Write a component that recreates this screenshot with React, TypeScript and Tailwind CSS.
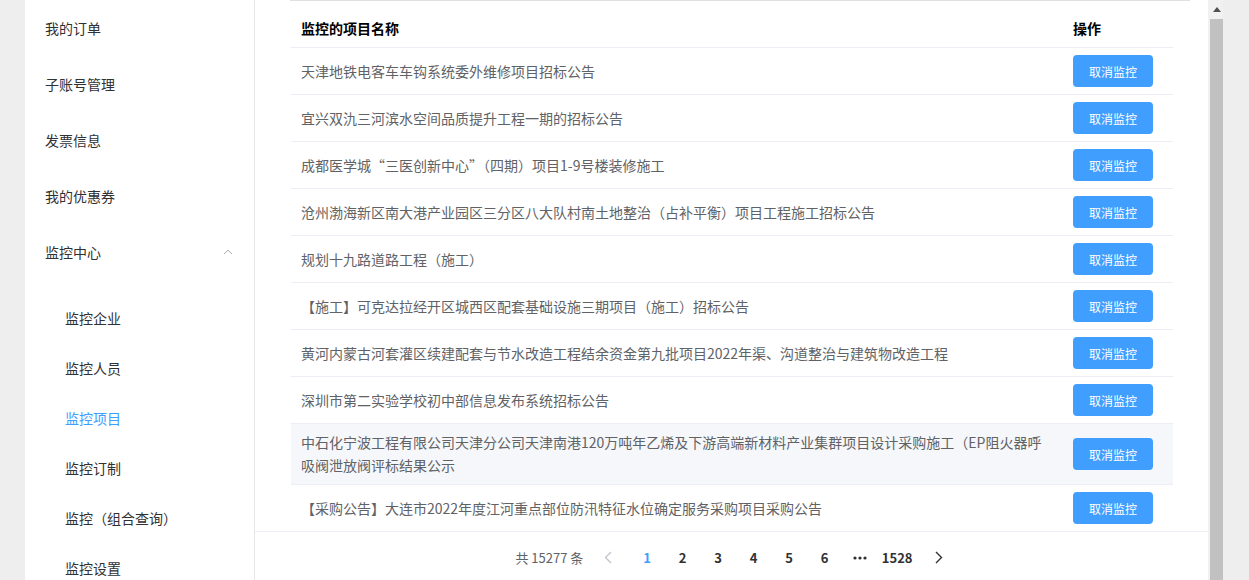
import React from 'react';

const menu = ['我的订单', '子账号管理', '发票信息', '我的优惠券'];
const subMenu = ['监控企业', '监控人员', '监控项目', '监控订制', '监控（组合查询）', '监控设置'];

const projects = [
  '天津地铁电客车车钩系统委外维修项目招标公告',
  '宜兴双氿三河滨水空间品质提升工程一期的招标公告',
  '成都医学城“三医创新中心”（四期）项目1-9号楼装修施工',
  '沧州渤海新区南大港产业园区三分区八大队村南土地整治（占补平衡）项目工程施工招标公告',
  '规划十九路道路工程（施工）',
  '【施工】可克达拉经开区城西区配套基础设施三期项目（施工）招标公告',
  '黄河内蒙古河套灌区续建配套与节水改造工程结余资金第九批项目2022年渠、沟道整治与建筑物改造工程',
  '深圳市第二实验学校初中部信息发布系统招标公告',
  '中石化宁波工程有限公司天津分公司天津南港120万吨年乙烯及下游高端新材料产业集群项目设计采购施工（EP阻火器呼吸阀泄放阀评标结果公示',
  '【采购公告】大连市2022年度江河重点部位防汛特征水位确定服务采购项目采购公告',
];

const pages = ['1', '2', '3', '4', '5', '6'];

function Sidebar() {
  return (
    <aside className="w-[230px] shrink-0 bg-white border-r border-[#e6e6e6] text-[14px] text-[#303133]">
      {menu.map((m) => (
        <div key={m} className="h-[56px] pl-[20px] flex items-center">
          {m}
        </div>
      ))}
      <div className="h-[56px] pl-[20px] pr-[21px] flex items-center">
        <span>监控中心</span>
        <svg className="ml-auto" width="10" height="6" viewBox="0 0 10 6" fill="none">
          <polyline points="1,5 5,1.2 9,5" stroke="#a8abb2" strokeWidth="1" />
        </svg>
      </div>
      <div className="pt-[13px]">
        {subMenu.map((s) => (
          <div
            key={s}
            className={`h-[50px] pl-[40px] flex items-center ${s === '监控项目' ? 'text-[#409eff]' : ''}`}
          >
            {s}
          </div>
        ))}
      </div>
    </aside>
  );
}

function Pagination() {
  return (
    <div className="border-t border-[#ebeef5] h-[49px] pt-[3px] pl-[5px] flex items-center justify-center text-[13px] text-[#303133]">
      <span className="text-[#606266] mr-[10px]">共 15277 条</span>
      <span className="w-[36px] h-[28px] flex items-center justify-center pr-[6px]">
        <svg width="8" height="13" viewBox="0 0 8 13" fill="none">
          <polyline points="7,1 1.5,6.5 7,12" stroke="#c0c4cc" strokeWidth="1.4" />
        </svg>
      </span>
      {pages.map((p) => (
        <span
          key={p}
          className={`min-w-[35.5px] h-[28px] px-[4px] flex items-center justify-center font-bold ${p === '1' ? 'text-[#409eff]' : ''}`}
        >
          {p}
        </span>
      ))}
      <span className="min-w-[35.5px] h-[28px] flex items-center justify-center">
        <svg width="14" height="4" viewBox="0 0 14 4" fill="#303133">
          <circle cx="2" cy="2" r="1.6" />
          <circle cx="7" cy="2" r="1.6" />
          <circle cx="12" cy="2" r="1.6" />
        </svg>
      </span>
      <span className="min-w-[35.5px] h-[28px] px-[4px] flex items-center justify-center font-bold">1528</span>
      <span className="w-[36px] h-[28px] flex items-center justify-center pl-[8px]">
        <svg width="8" height="13" viewBox="0 0 8 13" fill="none">
          <polyline points="1,1 6.5,6.5 1,12" stroke="#303133" strokeWidth="1.4" />
        </svg>
      </span>
    </div>
  );
}

function ProjectTable() {
  return (
    <div className="ml-[1px] mr-[17px] text-[14px] leading-[23px]">
      <div className="flex border-b border-[#ebeef5] font-bold text-black">
        <div className="flex-1 px-[10px] pt-[16px] pb-[7px]">监控的项目名称</div>
        <div className="w-[110px] px-[10px] pt-[16px] pb-[7px]">操作</div>
      </div>
      {projects.map((name, i) => (
        <div
          key={name}
          className={`flex items-center ${i < projects.length - 1 ? 'border-b border-[#ebeef5]' : ''} ${i === 8 ? 'bg-[#f5f7fa]' : ''}`}
        >
          <div className="flex-1 min-w-0 px-[10px] py-[7px] text-[#606266]">{name}</div>
          <div className="w-[110px] px-[10px] py-[7px]">
            <button
              type="button"
              className="w-[80px] h-[32px] rounded-[4px] bg-[#409eff] text-white text-[12px] flex items-center justify-center"
            >
              取消监控
            </button>
          </div>
        </div>
      ))}
    </div>
  );
}

function FakeScrollbar() {
  return (
    <div className="w-[15px] shrink-0 bg-[#f1f1f1] flex flex-col">
      <div className="h-[19px] flex items-center justify-center pl-[2px]">
        <svg width="8" height="5" viewBox="0 0 8 5" fill="#505050">
          <polygon points="4,0 8,5 0,5" />
        </svg>
      </div>
      <div className="flex-1 ml-[2px] bg-[#c1c1c1]" />
    </div>
  );
}

export default function App() {
  return (
    <div
      className="flex w-[1249px] h-[580px] overflow-hidden bg-[#eeeeee]"
      style={{ fontFamily: '"Noto Sans CJK SC", "Noto Sans", sans-serif' }}
    >
      <div className="w-[25px] shrink-0" />
      <Sidebar />
      <main className="w-[953px] shrink-0 bg-white flex flex-col">
        <div className="pl-[35px] pr-[18px]">
          <div className="border-t border-[#e0e0e0]" />
          <ProjectTable />
        </div>
        <Pagination />
      </main>
      <FakeScrollbar />
      <div className="flex-1" />
    </div>
  );
}
